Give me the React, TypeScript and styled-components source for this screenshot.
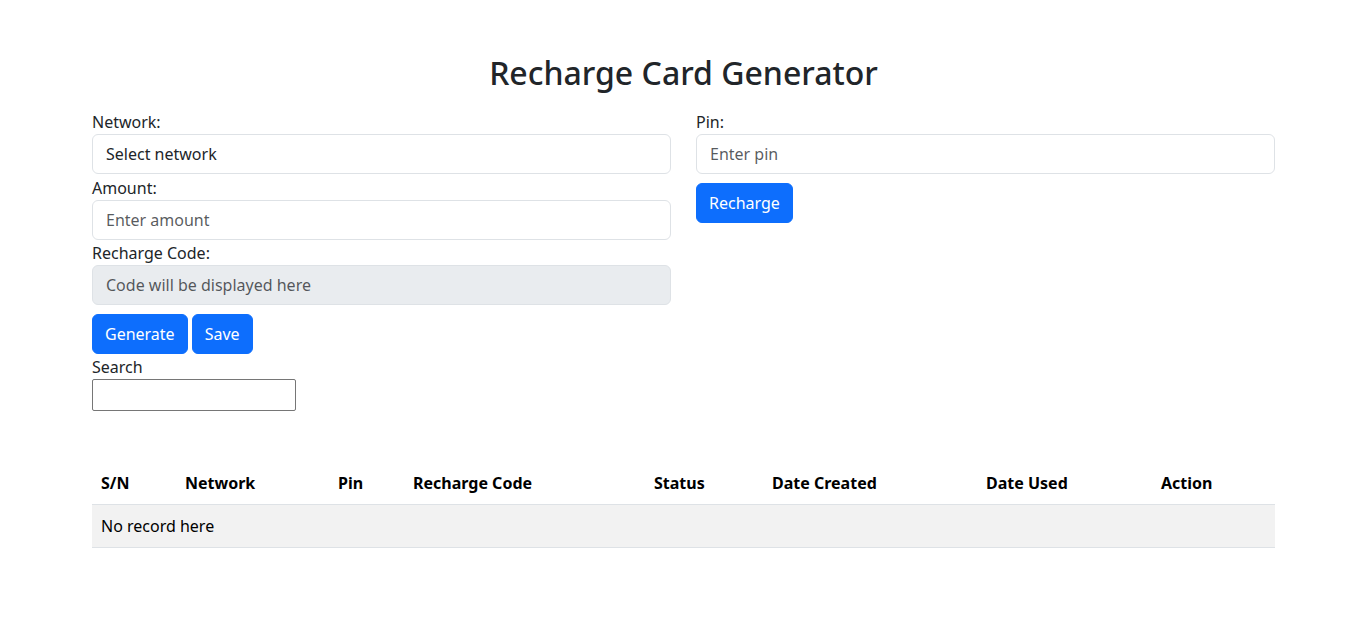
import React from "react";
import styled, { createGlobalStyle } from "styled-components";

const GlobalStyle = createGlobalStyle`
  *, *::before, *::after { box-sizing: border-box; }
  body {
    margin: 0;
    background: #fff;
    color: #212529;
    font-family: "Noto Sans", "Open Sans", sans-serif;
    font-size: 16px;
    line-height: 1.5;
  }
`;

const Page = styled.div`
  width: 1183px;
  margin-left: calc(50% - 590.5px);
  padding-top: 53px;
`;

const Title = styled.h1`
  margin: 0 0 17px;
  text-align: center;
  font-size: 32px;
  font-weight: 500;
  line-height: 40px;
  color: #212529;
`;

const Columns = styled.div`
  display: grid;
  grid-template-columns: 1fr 1fr;
  column-gap: 25px;
`;

const Column = styled.div`
  display: flex;
  flex-direction: column;
`;

const Field = styled.div`
  display: flex;
  flex-direction: column;
  margin-bottom: 1.5px;
`;

const Label = styled.label<{ $offset?: number }>`
  display: block;
  margin-top: ${(p) => p.$offset ?? 0}px;
  font-size: 16px;
  line-height: 24px;
  color: #212529;
`;

const Control = styled.input<{ $disabled?: boolean }>`
  display: block;
  width: 100%;
  height: 40px;
  padding: 6px 13px;
  font: inherit;
  font-size: 16px;
  line-height: 24px;
  color: #212529;
  background: ${(p) => (p.$disabled ? "#e9ecef" : "#fff")};
  border: 1px solid #dee2e6;
  border-radius: 6px;
  outline: none;
  &::placeholder {
    color: rgba(33, 37, 41, 0.75);
  }
`;

const SelectControl = styled.select`
  display: block;
  width: 100%;
  height: 40px;
  padding: 6px 13px;
  font: inherit;
  font-size: 16px;
  line-height: 24px;
  color: #212529;
  background: #fff;
  border: 1px solid #dee2e6;
  border-radius: 6px;
  appearance: none;
  outline: none;
`;

const ButtonRow = styled.div`
  display: flex;
  gap: 4px;
  margin-top: 7px;
`;

const Button = styled.button`
  height: 40px;
  padding: 0 12px;
  font: inherit;
  font-size: 16px;
  line-height: 24px;
  color: #fff;
  background: #0d6efd;
  border: 1px solid #0d6efd;
  border-radius: 6px;
  cursor: pointer;
`;

const SearchInput = styled.input`
  width: 204px;
  height: 32px;
  padding: 1px 2px;
  font: inherit;
  border: 1px solid #767676;
  border-radius: 2px;
  outline: none;
`;

const Table = styled.table`
  width: 100%;
  margin-top: 52px;
  border-collapse: collapse;
  table-layout: fixed;
  color: #000;
`;

const Th = styled.th`
  padding: 8px 9px 9px;
  text-align: left;
  font-weight: 700;
  line-height: 24px;
  border-bottom: 1px solid #dee2e6;
`;

const Td = styled.td`
  padding: 9px;
  line-height: 24px;
  background: #f2f2f2;
  border-bottom: 1px solid #dee2e6;
`;

const columns = [
  { name: "S/N", width: 84 },
  { name: "Network", width: 153 },
  { name: "Pin", width: 75 },
  { name: "Recharge Code", width: 241 },
  { name: "Status", width: 118 },
  { name: "Date Created", width: 214 },
  { name: "Date Used", width: 175 },
  { name: "Action", width: 123 },
];

export default function App() {
  return (
    <>
      <GlobalStyle />
      <Page>
        <Title>Recharge Card Generator</Title>
        <Columns>
          <Column>
            <Field>
              <Label>Network:</Label>
              <SelectControl defaultValue="">
                <option value="">Select network</option>
              </SelectControl>
            </Field>
            <Field>
              <Label>Amount:</Label>
              <Control placeholder="Enter amount" />
            </Field>
            <Field>
              <Label>Recharge Code:</Label>
              <Control $disabled readOnly placeholder="Code will be displayed here" />
            </Field>
            <ButtonRow>
              <Button>Generate</Button>
              <Button>Save</Button>
            </ButtonRow>
            <Label $offset={1}>Search</Label>
            <SearchInput />
          </Column>
          <Column>
            <Field>
              <Label>Pin:</Label>
              <Control placeholder="Enter pin" />
            </Field>
            <ButtonRow>
              <Button>Recharge</Button>
            </ButtonRow>
          </Column>
        </Columns>
        <Table>
          <colgroup>
            {columns.map((c) => (
              <col key={c.name} style={{ width: c.width }} />
            ))}
          </colgroup>
          <thead>
            <tr>
              {columns.map((c) => (
                <Th key={c.name}>{c.name}</Th>
              ))}
            </tr>
          </thead>
          <tbody>
            <tr>
              <Td colSpan={8}>No record here</Td>
            </tr>
          </tbody>
        </Table>
      </Page>
    </>
  );
}
